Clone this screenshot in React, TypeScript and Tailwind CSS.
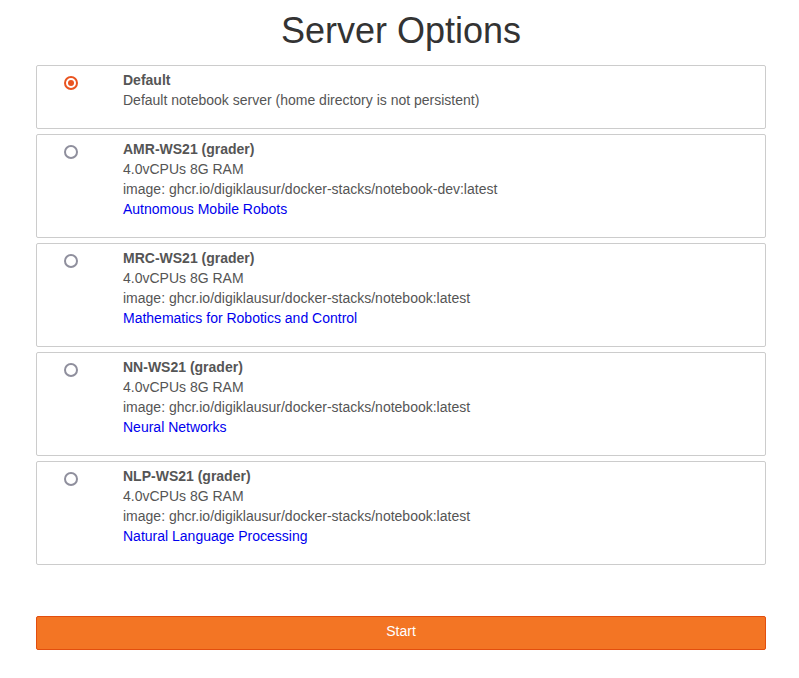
import { useState } from 'react';

type Profile = {
  id: string;
  name: string;
  lines: string[];
  link?: string;
};

const profiles: Profile[] = [
  {
    id: 'default',
    name: 'Default',
    lines: ['Default notebook server (home directory is not persistent)'],
  },
  {
    id: 'amr',
    name: 'AMR-WS21 (grader)',
    lines: ['4.0vCPUs 8G RAM', 'image: ghcr.io/digiklausur/docker-stacks/notebook-dev:latest'],
    link: 'Autnomous Mobile Robots',
  },
  {
    id: 'mrc',
    name: 'MRC-WS21 (grader)',
    lines: ['4.0vCPUs 8G RAM', 'image: ghcr.io/digiklausur/docker-stacks/notebook:latest'],
    link: 'Mathematics for Robotics and Control',
  },
  {
    id: 'nn',
    name: 'NN-WS21 (grader)',
    lines: ['4.0vCPUs 8G RAM', 'image: ghcr.io/digiklausur/docker-stacks/notebook:latest'],
    link: 'Neural Networks',
  },
  {
    id: 'nlp',
    name: 'NLP-WS21 (grader)',
    lines: ['4.0vCPUs 8G RAM', 'image: ghcr.io/digiklausur/docker-stacks/notebook:latest'],
    link: 'Natural Language Processing',
  },
];

export default function App() {
  const [selected, setSelected] = useState('default');

  return (
    <div className="min-h-[678px] bg-white font-['Liberation_Sans',Arial,sans-serif] text-[14px] leading-[20px] text-[#555]">
      <div className="ml-[36px] w-[730px]">
        {/* Titulo */}
        <h1 className="pt-[11px] mb-[14px] text-center text-[36px] leading-[39.6px] font-normal text-[#333]">
          Server Options
        </h1>

        {/* Perfis */}
        <div className="flex flex-col gap-[5px]">
          {profiles.map((p) => {
            const isChecked = selected === p.id;
            return (
              <label
                key={p.id}
                className="flex border border-[#ccc] rounded-[2px] pt-[4px] pb-[18px] cursor-pointer"
              >
                <div className="w-[86px] shrink-0">
                  <input
                    type="radio"
                    name="profile"
                    checked={isChecked}
                    onChange={() => setSelected(p.id)}
                    className="sr-only"
                  />
                  <span
                    className={
                      isChecked
                        ? 'mt-[6px] ml-[27px] flex items-center justify-center w-[14px] h-[14px] rounded-full border-2 border-[#e95420]'
                        : 'mt-[6px] ml-[27px] flex items-center justify-center w-[14px] h-[14px] rounded-full border-2 border-[#8f8f9d]'
                    }
                  >
                    {isChecked && <span className="w-[6px] h-[6px] rounded-full bg-[#e95420]" />}
                  </span>
                </div>
                <div>
                  <div className="font-bold">{p.name}</div>
                  {p.lines.map((l) => (
                    <div key={l}>{l}</div>
                  ))}
                  {p.link && (
                    <a href="#" className="block text-[#0000ee]" onClick={(e) => e.preventDefault()}>
                      {p.link}
                    </a>
                  )}
                </div>
              </label>
            );
          })}
        </div>

        {/* Submit */}
        <button
          type="submit"
          className="mt-[51px] w-full h-[34px] pb-[4px] bg-[#f37524] border border-[#e34e0e] rounded-[2px] text-white text-[14px]"
        >
          Start
        </button>
      </div>
    </div>
  );
}
